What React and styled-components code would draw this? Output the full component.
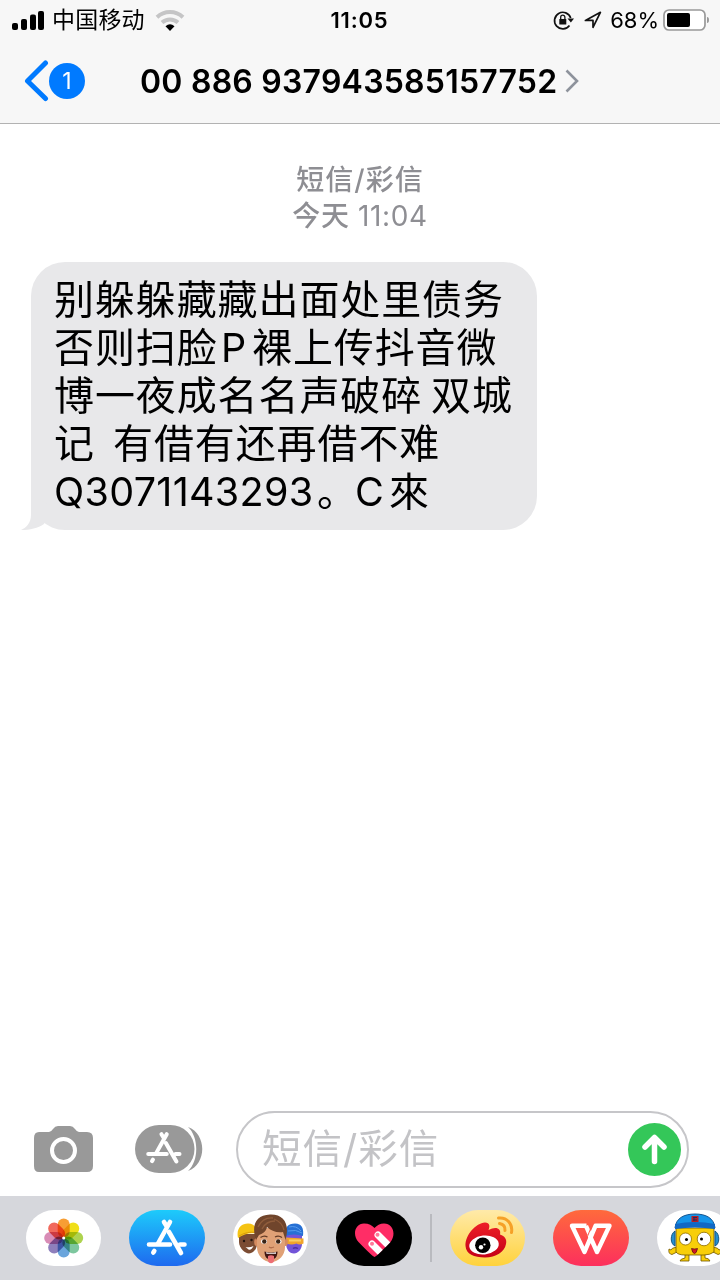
import React from "react";
import styled, { createGlobalStyle } from "styled-components";

const GlobalStyle = createGlobalStyle`
  * {
    box-sizing: border-box;
  }
  body {
    margin: 0;
    overflow: hidden;
    background: #fff;
    font-family: Inter, "Noto Sans CJK SC", sans-serif;
  }
  svg {
    display: block;
    flex: none;
  }
`;

const Screen = styled.div`
  width: 720px;
  height: 1280px;
  display: flex;
  flex-direction: column;
  overflow: hidden;
  background: #fff;
`;

const Header = styled.header`
  height: 124px;
  background: #f7f7f7;
  border-bottom: 1px solid #b2b2b2;
`;

const StatusBar = styled.div`
  height: 40px;
  display: grid;
  grid-template-columns: 1fr 60px 1fr;
  align-items: center;
  padding: 0 11px 0 12px;
`;

const StatusGroup = styled.div`
  display: flex;
  align-items: center;
  justify-content: ${props => (props.$end ? "flex-end" : "flex-start")};
`;

const StatusText = styled.span`
  font-size: ${props => props.$size || 22}px;
  font-weight: ${props => props.$weight || 400};
  letter-spacing: ${props => props.$spacing || 0}px;
  line-height: 30px;
  margin: ${props => props.$margin || 0};
  white-space: nowrap;
`;

const NavBar = styled.div`
  height: 82px;
  display: flex;
  align-items: center;
  padding-left: 24px;
`;

const Badge = styled.span`
  width: 36px;
  height: 36px;
  margin-left: -1px;
  border-radius: 50%;
  background: #007aff;
  color: #fff;
  font-size: 23px;
  line-height: 36px;
  text-align: center;
`;

const Title = styled.h1`
  margin: 0 6px 0 55px;
  width: 419px;
  font-size: 32px;
  font-weight: 600;
  letter-spacing: 0.22px;
  white-space: nowrap;
`;

const Conversation = styled.main`
  flex: 1;
  padding: 38px 31px 0;
`;

const Stamp = styled.div`
  display: flex;
  flex-direction: column;
  align-items: center;
  color: #8e8e93;
  font-size: 28px;
  letter-spacing: 0.6px;
  line-height: 36px;
`;

const StampKind = styled.div`
  font-weight: 500;
  letter-spacing: 1px;
`;

const Bold = styled.span`
  font-weight: 500;
`;

const Bubble = styled.div`
  position: relative;
  width: 506px;
  height: 268px;
  margin-top: 27.5px;
  padding: 14px 0 0 23px;
  border-radius: 34px;
  background: #e8e8ea;
  color: #000;
`;

const Tail = styled.svg`
  position: absolute;
  left: -10px;
  bottom: 0;
`;

const Line = styled.div`
  position: relative;
  display: flex;
  height: 48px;
  line-height: 48px;
  white-space: pre;
`;

const Run = styled.span`
  width: ${props => props.$width}px;
  flex: none;
  letter-spacing: ${props => (props.$latin ? 0.3 : 0.9)}px;
  font-size: ${props => (props.$latin ? 39.5 : 40)}px;
`;

const Composer = styled.div`
  height: 96px;
  display: flex;
  align-items: center;
  padding: 2px 31px 0 33px;
`;

const Field = styled.div`
  width: 453px;
  height: 77px;
  margin-left: 33px;
  padding: 0 6px 0 24px;
  display: flex;
  align-items: center;
  justify-content: space-between;
  border: 2px solid #c6c6c9;
  border-radius: 39px;
`;

const Placeholder = styled.span`
  color: #c3c3c6;
  font-size: 39.5px;
  letter-spacing: 1px;
  line-height: 60px;
`;

const AppsIcon = styled.svg`
  margin-left: 41px;
`;

const Tray = styled.footer`
  height: 84px;
  display: flex;
  align-items: flex-start;
  gap: 28px;
  padding: 14px 0 0 25.6px;
  background: #d6d7dc;
`;

const Pill = styled.div`
  width: 75.5px;
  height: 56px;
  flex: none;
  border-radius: 28px;
  overflow: hidden;
  background: ${props => props.$bg || "#fff"};
`;

const Divider = styled.div`
  width: 2px;
  height: 48px;
  margin: 4px -10px;
  flex: none;
  background: #b9babf;
`;

const message = [
  [{ text: "别躲躲藏藏出面处里债务", width: 455 }],
  [
    { text: "否则扫脸", width: 167 },
    { text: "P", width: 31, latin: true },
    { text: "裸上传抖音微", width: 250 }
  ],
  [
    { text: "博一夜成名名声破碎", width: 377 },
    { text: "双城", width: 82 }
  ],
  [
    { text: "记", width: 59 },
    { text: "有借有还再借不难", width: 330 }
  ],
  [
    { text: "Q3071143293", width: 263, latin: true },
    { text: "。", width: 38 },
    { text: "C", width: 34, latin: true },
    { text: "來", width: 41 }
  ]
];

const petals = [
  "#f7941d",
  "#efdc00",
  "#a5cf3c",
  "#6fc193",
  "#5a9bd8",
  "#8271b5",
  "#d47fae",
  "#f0594a"
];

const Signal = () => (
  <svg width="33" height="20" viewBox="0 0 33 20">
    <rect x="0" y="13" width="6" height="7" rx="2" />
    <rect x="9" y="9" width="6" height="11" rx="2" />
    <rect x="18" y="4.500" width="6" height="15.500" rx="2" />
    <rect x="26" y="1" width="6" height="19" rx="2" />
  </svg>
);

const Wifi = () => (
  <svg width="30" height="22" viewBox="0 0 30 22" fill="none">
    <path d="M2 8.200A19 19 0 0 1 28 8.200" stroke="#c5c5c6" strokeWidth="4" />
    <path d="M7 13.500A12 12 0 0 1 23 13.500" stroke="#c5c5c6" strokeWidth="4" />
    <path d="M10.500 17.300Q15 13.400 19.500 17.300L15 22Z" fill="#000" />
  </svg>
);

const RotationLock = () => (
  <svg width="22" height="20" viewBox="0 0 22 20" fill="none">
    <path
      d="M16.500 15.500A8.300 8.300 0 1 1 17.700 8"
      stroke="#111"
      strokeWidth="1.700"
    />
    <path d="M14.500 8.500H21L17.900 12.500Z" fill="#111" />
    <rect x="6.300" y="9" width="7" height="5.500" rx="0.600" fill="#111" />
    <path d="M7.700 9V7.200a2.100 2.100 0 0 1 4.200 0V9" stroke="#111" strokeWidth="1.300" />
  </svg>
);

const Location = () => (
  <svg width="18" height="18" viewBox="0 0 18 18" fill="none">
    <path
      d="M1.400 9.400L16.400 1.300L9 16.300V9.400Z"
      stroke="#111"
      strokeWidth="1.700"
      strokeLinejoin="round"
    />
  </svg>
);

const Battery = () => (
  <svg width="46" height="22" viewBox="0 0 46 22">
    <rect x="1" y="1" width="41" height="20" rx="5" fill="#fff" stroke="#999" strokeWidth="1.700" />
    <rect x="4" y="4" width="23" height="14" rx="2" />
    <path d="M44 8q2 0 2 3t-2 3z" fill="#999" />
  </svg>
);

const AppStoreMark = ({ x = 0, y = 0, scale = 1 }) => (
  <g
    transform={`translate(${x} ${y}) scale(${scale})`}
    stroke="#fff"
    strokeWidth="4.600"
    strokeLinecap="round"
    fill="none"
  >
    <path d="M2 25H23M33 25H37.500" />
    <path d="M17 2.500L19.500 6.500M23 2.500L11 24" />
    <path d="M22 12.500L34 33.500" />
    <path d="M7.300 31.500L6.300 33" />
  </g>
);

const Photos = () => (
  <svg width="76" height="56" viewBox="0 0 76 56">
    <g style={{ isolation: "isolate" }}>
      {petals.map((color, index) => (
        <rect
          key={color}
          x="31.700"
          y="8.500"
          width="12"
          height="19"
          rx="6"
          fill={color}
          opacity="0.900"
          style={{ mixBlendMode: "multiply" }}
          transform={`rotate(${index * 45} 37.700 28)`}
        />
      ))}
    </g>
    <circle cx="37.700" cy="28" r="1.500" fill="#fff" />
  </svg>
);

const Memoji = () => (
  <svg width="76" height="56" viewBox="0 0 76 56">
    {/* left: yellow cap */}
    <path d="M6 24h18v10c0 5-4 9.500-8 9.500S6 38 6 32z" fill="#7b4c33" />
    <path d="M5 28C3 19 8 13.500 15 13.500c6 0 9 4 9 10-7-1-13 0-19 4.500z" fill="#f5c313" />
    <path d="M6 26q8-5 17-3.500" stroke="#d99c0c" fill="none" />
    <circle cx="11" cy="31" r="1.200" fill="#21140f" />
    <circle cx="18.500" cy="30" r="1.200" fill="#21140f" />
    <path d="M12.500 37q4 1 8-1-2 4.500-5 3.500z" fill="#fff" />
    {/* right: purple with goggles */}
    <path d="M53 24h16v10c0 5-4 9.500-8 9.500-5 0-8-5-8-10z" fill="#7254d8" />
    <path d="M52 26c-1-8 3-12.500 10-12.500s9 5 8 12.500c-6-2-12-2-18 0z" fill="#2670d4" />
    <path d="M56 17q7-2 12 4M55 21q8-2 14 2" stroke="#559bed" fill="none" />
    <path d="M53 27.500l17.500 1v5q-4 2-7 0-5 2-10 0z" fill="#f1a42b" />
    <path d="M56 29.500h12v2H56z" fill="#f9cf63" />
    <path d="M60 38.500q2-1.500 5 0" stroke="#4c319f" strokeWidth="1.300" fill="none" />
    {/* middle face */}
    <ellipse cx="23.500" cy="32" rx="2.300" ry="4" fill="#d58b5f" />
    <ellipse cx="52.500" cy="32" rx="2.300" ry="4" fill="#d58b5f" />
    <path d="M24 18h28v19c0 8-6 15-14 15s-14-7-14-15z" fill="#e0a176" />
    <path d="M23 30C18 15 23 5 37 4.500 51 4 57 14 52.500 30L50 22c-6 1-12-1-16-5-1 5-5 7-8 8z" fill="#70452c" />
    <path d="M25 17q5-10 15-9M29 19q4-8 13-8M41 9q8 3 10 11" stroke="#8f5c3b" strokeWidth="1.300" fill="none" />
    <path d="M27.500 27.500q3.500-2.500 7-.5M42 27q3.500-2 7 .5" stroke="#633b26" strokeWidth="1.400" fill="none" />
    <ellipse cx="31" cy="31.500" rx="3" ry="2.300" fill="#fff" />
    <ellipse cx="45.500" cy="31.500" rx="3" ry="2.300" fill="#fff" />
    <circle cx="31.300" cy="31.500" r="2.200" fill="#392417" />
    <circle cx="45.200" cy="31.500" r="2.200" fill="#392417" />
    <path d="M36 37q2 1.500 5 0" stroke="#b16e4b" strokeWidth="1.300" fill="none" />
    <path d="M31.500 41.500q6.500 2 13 0c0 5-2 8-6.500 8s-6.500-3-6.500-8z" fill="#421713" />
    <path d="M33 42.200q5 1.300 10 0v1.500H33.500z" fill="#fff" />
    <path d="M35 46q3-1.500 6 0v4.500c0 3.500-6 3.500-6 0z" fill="#ed6e74" />
  </svg>
);

const Heart = () => (
  <svg width="76" height="56" viewBox="0 0 76 56">
    <defs>
      <clipPath id="heart">
        <path d="M38.500 47Q36 46 22.500 32C16 25 19 13.500 28 13.500c5 0 8 2 10.500 4.500C41 15.500 44 13.500 48 13.500c9 0 12.500 10.500 6.500 18.500Q41 46 38.500 47z" />
      </clipPath>
    </defs>
    <g clipPath="url(#heart)">
      <rect width="76" height="56" fill="#ff2d66" />
      <g stroke="#fff" strokeWidth="7" strokeLinecap="round">
        <path d="M42 25L57 40M36 34L50 48" />
      </g>
      <g fill="#ff7899">
        <circle cx="41.500" cy="24.700" r="2" />
        <circle cx="36" cy="33.800" r="2" />
      </g>
    </g>
  </svg>
);

const Weibo = () => (
  <svg width="76" height="56" viewBox="0 0 76 56">
    <defs>
      <linearGradient id="weibo" x2="0" y2="1">
        <stop stopColor="#ed1f27" />
        <stop offset="1" stopColor="#c50017" />
      </linearGradient>
    </defs>
    <path
      d="M15.500 36C15 25 26 13 35 12.500c5 0 5 4 3.500 7.500 7-4 13-2 11.500 4.500 5 1.500 7 5 6 9.500-1.500 8-10 13.500-21 13.500C24 47.500 16 44 15.500 36z"
      fill="url(#weibo)"
    />
    <ellipse cx="34" cy="35" rx="14.800" ry="9.500" fill="#fff" transform="rotate(-6 34 35)" />
    <circle cx="32.800" cy="35.300" r="7.700" />
    <circle cx="31" cy="37.300" r="2.200" fill="#fff" />
    <circle cx="34.500" cy="34.500" r="1.100" fill="#fff" />
    <g stroke="#f6a127" strokeWidth="3" fill="none" strokeLinecap="round">
      <path d="M48.500 8C57 7 63 14 61.500 22.500" />
      <path d="M49.500 13.500q6 1 5.500 7" />
    </g>
  </svg>
);

const Wps = () => (
  <svg width="76" height="56" viewBox="0 0 76 56" fill="none">
    <g stroke="#fff" strokeWidth="4.400" strokeLinejoin="round">
      <path d="M33.500 15.800H19L31.500 42L42.500 15.800H56.500L44 42L36 24" />
      <path d="M33 15.800L36.500 24" />
    </g>
    <path d="M34.200 27L39.500 14" stroke="#fe5948" strokeWidth="1" />
  </svg>
);

const YellowMascot = () => (
  <svg width="76" height="56" viewBox="0 0 76 56">
    <g stroke="#705500" strokeWidth="0.800" fill="#f8ce08">
      <path d="M28 44v4q-5 1-5 3h9v-7M44 44v7h9q-1-3-5-3v-4" />
      <path d="M20 37q-6 1-6 3l-2-1q-1 5 3 5.500l5-2.500M56 37q6 1 6 3l2-1q1 5-3 5.500l-5-2.500" />
      <path d="M19 18h38v24q-4 3-10 3H28q-7 0-9-3z" />
    </g>
    <path d="M18 21c-5 3-5 13 0 15zM58 21c5 3 5 13 0 15z" fill="#258fd2" stroke="#165782" />
    <path d="M18 18C19 8 27 4 38 4s19 4 20 14q-20-4-40 0z" fill="#1695ea" stroke="#17548d" />
    <path d="M18 14q20-4 40 0v5q-20-3-40 0z" fill="#1268c4" />
    <path d="M34.500 6h7v6h-7z" fill="#b51f25" />
    <path d="M36 7.500h4M36 10h4M37 7v4" stroke="#252a61" />
    <circle cx="28.500" cy="29" r="6" fill="#fff" stroke="#8a6900" strokeWidth="0.800" />
    <circle cx="47" cy="29" r="6.800" fill="#fff" stroke="#8a6900" strokeWidth="0.800" />
    <circle cx="29.500" cy="29.500" r="1.500" />
    <circle cx="44.500" cy="29" r="1.500" />
    <path d="M34.500 38.500q3 1 6 0-1 5-3 5t-3-5z" fill="#cf1824" stroke="#641215" strokeWidth="0.800" />
  </svg>
);

const App = () => (
  <Screen>
    <GlobalStyle />
    <Header>
      <StatusBar>
        <StatusGroup>
          <Signal />
          <StatusText $size={23} $spacing={0.2} $margin="0 10px 0 7px">
            中国移动
          </StatusText>
          <Wifi />
        </StatusGroup>
        <StatusText $weight={600} $spacing={0.8}>
          11:05
        </StatusText>
        <StatusGroup $end>
          <RotationLock />
          <StatusText $margin="0 9px 0 0" />
          <Location />
          <StatusText $margin="0 4px 0 8px">68%</StatusText>
          <Battery />
        </StatusGroup>
      </StatusBar>
      <NavBar>
        <svg width="26" height="42" viewBox="0 0 26 42" fill="none">
          <path
            d="M21.500 3L3.500 21L21.500 38.500"
            stroke="#007aff"
            strokeWidth="5"
            strokeLinecap="round"
            strokeLinejoin="round"
          />
        </svg>
        <Badge>1</Badge>
        <Title>00 886 937943585157752</Title>
        <svg width="14" height="24" viewBox="0 0 14 24" fill="none">
          <path d="M1.500 1.500L12 12L1.500 22.500" stroke="#8e939c" strokeWidth="2.600" />
        </svg>
      </NavBar>
    </Header>
    <Conversation>
      <Stamp>
        <StampKind>短信/彩信</StampKind>
        <div>
          <Bold>今天</Bold> 11:04
        </div>
      </Stamp>
      <Bubble>
        <Tail width="32" height="34" viewBox="0 0 32 34" fill="#e8e8ea">
          <path d="M10 0V19C10 27 5 32 0 34C9 34 17 32 23 28L32 10Z" />
        </Tail>
        {message.map((line, index) => (
          <Line key={index}>
            {line.map(run => (
              <Run key={run.text} $width={run.width} $latin={run.latin}>
                {run.text}
              </Run>
            ))}
          </Line>
        ))}
      </Bubble>
    </Conversation>
    <Composer>
      <svg width="61" height="47" viewBox="0 0 61 47">
        <path
          d="M6 6h10q2 0 4-3 2-3 5-3h12q3 0 5 3t4 3h8q6 0 6 6v28q0 6-6 6H6q-5 0-5-6V12Q1 6 6 6z"
          fill="#999"
        />
        <circle cx="30.500" cy="24.500" r="11.500" fill="none" stroke="#fff" strokeWidth="4" />
      </svg>
      <AppsIcon width="68" height="48" viewBox="0 0 68 48">
        <path d="M53 2C72 9 72 39 53 46C64 36 64 12 53 2Z" fill="#999" />
        <rect width="59.500" height="48" rx="24" fill="#999" />
        <AppStoreMark x={11.5} y={7} scale={0.88} />
      </AppsIcon>
      <Field>
        <Placeholder>短信/彩信</Placeholder>
        <svg width="53" height="53" viewBox="0 0 53 53" fill="none">
          <circle cx="26.500" cy="26.500" r="26.500" fill="#34c759" />
          <path
            d="M26.500 38.500V16M17 24L26.500 14.500L36 24"
            stroke="#fff"
            strokeWidth="5.500"
            strokeLinecap="round"
            strokeLinejoin="round"
          />
        </svg>
      </Field>
    </Composer>
    <Tray>
      <Pill>
        <Photos />
      </Pill>
      <Pill $bg="linear-gradient(#1dcbfb, #1e69ef)">
        <svg width="76" height="56" viewBox="0 0 76 56">
          <AppStoreMark x={18} y={9.5} />
        </svg>
      </Pill>
      <Pill>
        <Memoji />
      </Pill>
      <Pill $bg="#000">
        <Heart />
      </Pill>
      <Divider />
      <Pill $bg="linear-gradient(#ffeaa9, #ffd23c)">
        <Weibo />
      </Pill>
      <Pill $bg="linear-gradient(#ff6a3c, #fc2f5d)">
        <Wps />
      </Pill>
      <Pill>
        <YellowMascot />
      </Pill>
    </Tray>
  </Screen>
);

export default App;
